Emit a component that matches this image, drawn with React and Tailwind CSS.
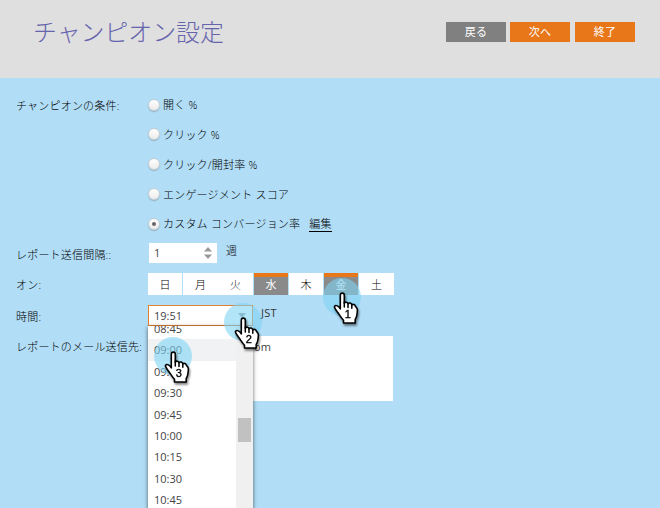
import React from 'react';

const days = [
  { label: '日', w: 'w-[34px] mr-[1px]' },
  { label: '月', w: 'w-[35px]' },
  { label: '火', w: 'w-[35px] mr-[1px]', soft: true },
  { label: '水', w: 'w-[34px] mr-[1px]', on: true },
  { label: '木', w: 'w-[34px] mr-[1px]' },
  { label: '金', w: 'w-[34px] mr-[1px]', on: true },
  { label: '土', w: 'w-[35px]' },
];
const times = ['08:45', '09:00', '09:15', '09:30', '09:45', '10:00', '10:15', '10:30', '10:45'];

function Radio({ checked, h, children }) {
  return (
    <div className={`flex items-center ${h}`}>
      <span className="mr-[3px] flex h-[12px] w-[12px] shrink-0 items-center justify-center rounded-full border border-[#c3cdd3] bg-gradient-to-b from-white to-[#ebebeb] shadow-[0_1px_1px_rgba(120,120,120,0.45)]">
        {checked && <span className="h-[4px] w-[4px] rounded-full bg-[#666]" />}
      </span>
      <span className="pt-[1px]">{children}</span>
    </div>
  );
}

function Pointer({ n, pos }) {
  return (
    <div className={`absolute ${pos}`}>
      <div className="absolute -left-[19px] -top-[15px] h-[38px] w-[38px] rounded-full bg-[#7fd4f3]/60" />
      <svg className="absolute -left-[9px] -top-[1px] drop-shadow-[1px_2px_1px_rgba(0,0,0,0.5)]" width="28" height="36" viewBox="0 0 28 36">
        <path d="M7.3 3.2C7.3.4 11.2.4 11.3 3.2V11.2C12.2 9.5 14.7 10 15 11.7C16.2 10.4 18.5 11 18.8 12.9C20 11.8 22.2 12.6 22.5 14.5C23.2 15.5 24.4 16 24.4 18C24.2 22 24.1 25 22.2 27.4V31H10.5V28.2C7.5 25 6.5 22.5 4 19.4C2.5 17.3 1 15.6 1.5 14.4C2.9 12.4 5.8 14.2 7.3 16.9Z" fill="#fff" stroke="#000" strokeWidth="1.6" strokeLinejoin="round" />
        <path d="M11.3 10V15M15 11.5V15.6M18.8 12.8V16.2" stroke="#000" strokeWidth="1.5" strokeLinecap="round" />
        <text x="15" y="26.2" textAnchor="middle" fontFamily="Liberation Sans, Arial, sans-serif" fontSize="11" fill="#000" stroke="#000" strokeWidth="0.35">{n}</text>
      </svg>
    </div>
  );
}

export default function App() {
  return (
    <div className="relative h-[508px] w-[660px] overflow-hidden bg-[#b1ddf6] font-['Open_Sans','Noto_Sans_CJK_JP',sans-serif] text-[11px] leading-[16px] tracking-[0.2px] text-black">
      <header className="flex h-[78px] items-start justify-between bg-[#dfdfdf] pl-[33px] pr-[25px]">
        <h1 className="mt-[14px] whitespace-nowrap text-[23.9px] font-light leading-[36px] tracking-normal text-[#6664ac]">チャンピオン設定</h1>
        <div className="mt-[22px] flex text-white">
          <button className="mr-[4px] h-[20px] w-[60px] bg-[#808080]">戻る</button>
          <button className="mr-[5px] h-[20px] w-[60px] bg-[#e8771a]">次へ</button>
          <button className="h-[20px] w-[60px] bg-[#e8771a]">終了</button>
        </div>
      </header>

      <main className="flex flex-col whitespace-nowrap pl-[16px] font-light">
        <div className="flex pt-[12px]">
          <div className="flex h-[30px] w-[132px] items-center pt-[2px]">チャンピオンの条件:</div>
          <div>
            <Radio h="h-[29px]">開く %</Radio>
            <Radio h="h-[30px]">クリック %</Radio>
            <Radio h="h-[30px]">クリック/開封率 %</Radio>
            <Radio h="h-[30px]">エンゲージメント スコア</Radio>
            <Radio h="h-[29px]" checked>
              カスタム コンバージョン率<span className="ml-[9px] border-b border-black">編集</span>
            </Radio>
          </div>
        </div>

        <div className="mt-[5px] flex h-[20px]">
          <div className="w-[133px] pt-[4px]">レポート送信間隔::</div>
          <div className="flex h-[20px] w-[68px] items-center justify-between bg-white pl-[5px] pr-[5px] font-normal text-[#444]">
            1
            <svg width="8" height="12" viewBox="0 0 8 12" fill="#999"><path d="M4 0L8 4.5H0ZM4 12L8 7.5H0Z" /></svg>
          </div>
          <span className="ml-[9px]">週</span>
        </div>

        <div className="mt-[10px] flex h-[22px]">
          <div className="w-[132px] pt-[4px]">オン:</div>
          <div className="flex">
            {days.map((d) => (
              <div key={d.label} className={`flex h-[22px] items-center justify-center ${d.w} ${d.on ? 'border-t-4 border-[#e8771a] bg-[#8a8a8a] pb-[2px] font-normal text-white' : 'bg-white pt-[1px]'} ${d.soft ? 'text-[#333]' : ''}`}>{d.label}</div>
            ))}
          </div>
        </div>

        <div className="mt-[10px] flex h-[21px]">
          <div className="w-[132px] pt-[4px]">時間:</div>
          <div className="relative flex h-[21px] w-[105px] items-center justify-between border border-[#e08030] bg-white pl-[5px] pr-[6px] font-normal tracking-normal text-[#444]">
            19:51
            <svg width="8" height="5" viewBox="0 0 8 5" fill="#999"><path d="M0 0H8L4 5Z" /></svg>
            <div className="absolute -left-[1px] top-[20px] z-10 flex h-[183px] w-[105px] overflow-hidden bg-white shadow-[0_1px_4px_rgba(0,0,0,0.6)]">
              <ul className="-mt-[8px] w-[88px]">
                {times.map((t) => (
                  <li key={t} className={`h-[21.4px] pl-[6px] leading-[21.4px] ${t === '09:00' ? 'bg-[#f1f2f4]' : ''}`}>{t}</li>
                ))}
              </ul>
              <div className="w-[17px] bg-[#f0f0f0] pl-[2px] pt-[92px]">
                <div className="h-[24px] w-[13px] bg-[#c1c1c1]" />
              </div>
            </div>
          </div>
          <span className="ml-[8px] font-normal text-[#333]">JST</span>
        </div>

        <div className="mt-[10px] flex">
          <div className="w-[132px] pt-[3px]">レポートのメール送信先:</div>
          <div className="h-[65px] w-[245px] bg-white pl-[106px] pt-[3px] font-normal text-[#444]">om</div>
        </div>
      </main>

      <div className="absolute left-0 top-0 z-20">
        <Pointer n={1} pos="left-[342px] top-[293px]" />
        <Pointer n={2} pos="left-[243px] top-[318px]" />
        <Pointer n={3} pos="left-[173px] top-[352px]" />
      </div>
    </div>
  );
}
